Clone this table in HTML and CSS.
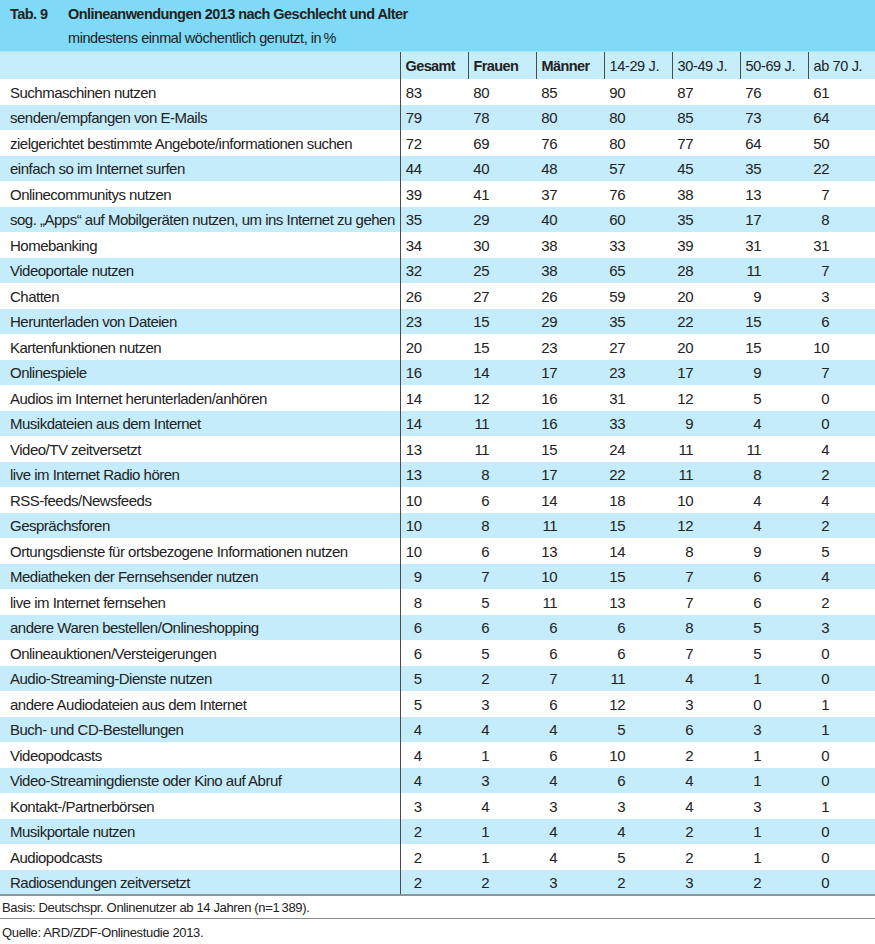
FILE: index.html
```html
<!DOCTYPE html>
<html lang="de">
<head>
<meta charset="utf-8">
<title>Tab. 9</title>
<link rel="stylesheet" href="styles.css">
</head>
<body>
<div class="page">
  <header class="caption">
    <div class="caption-line">
      <span class="tab-no">Tab. 9</span>
      <span class="tab-title">Onlineanwendungen 2013 nach Geschlecht und Alter</span>
    </div>
    <div class="caption-sub">mindestens einmal wöchentlich genutzt, in&#8201;%</div>
  </header>
  <table class="data">
    <colgroup>
      <col class="c-label"><col class="c-num"><col class="c-num"><col class="c-num"><col class="c-num"><col class="c-num"><col class="c-num"><col class="c-last">
    </colgroup>
    <thead>
      <tr><th></th><th>Gesamt</th><th>Frauen</th><th>Männer</th><th class="light">14-29 J.</th><th class="light">30-49 J.</th><th class="light">50-69 J.</th><th class="light">ab 70 J.</th></tr>
    </thead>
    <tbody>
      <tr><td>Suchmaschinen nutzen</td><td><span>83</span></td><td><span>80</span></td><td><span>85</span></td><td><span>90</span></td><td><span>87</span></td><td><span>76</span></td><td><span>61</span></td></tr>
      <tr><td>senden/empfangen von E-Mails</td><td><span>79</span></td><td><span>78</span></td><td><span>80</span></td><td><span>80</span></td><td><span>85</span></td><td><span>73</span></td><td><span>64</span></td></tr>
      <tr><td>zielgerichtet bestimmte Angebote/informationen suchen</td><td><span>72</span></td><td><span>69</span></td><td><span>76</span></td><td><span>80</span></td><td><span>77</span></td><td><span>64</span></td><td><span>50</span></td></tr>
      <tr><td>einfach so im Internet surfen</td><td><span>44</span></td><td><span>40</span></td><td><span>48</span></td><td><span>57</span></td><td><span>45</span></td><td><span>35</span></td><td><span>22</span></td></tr>
      <tr><td>Onlinecommunitys nutzen</td><td><span>39</span></td><td><span>41</span></td><td><span>37</span></td><td><span>76</span></td><td><span>38</span></td><td><span>13</span></td><td><span>7</span></td></tr>
      <tr><td>sog. „Apps“ auf Mobilgeräten nutzen, um ins Internet zu gehen</td><td><span>35</span></td><td><span>29</span></td><td><span>40</span></td><td><span>60</span></td><td><span>35</span></td><td><span>17</span></td><td><span>8</span></td></tr>
      <tr><td>Homebanking</td><td><span>34</span></td><td><span>30</span></td><td><span>38</span></td><td><span>33</span></td><td><span>39</span></td><td><span>31</span></td><td><span>31</span></td></tr>
      <tr><td>Videoportale nutzen</td><td><span>32</span></td><td><span>25</span></td><td><span>38</span></td><td><span>65</span></td><td><span>28</span></td><td><span>11</span></td><td><span>7</span></td></tr>
      <tr><td>Chatten</td><td><span>26</span></td><td><span>27</span></td><td><span>26</span></td><td><span>59</span></td><td><span>20</span></td><td><span>9</span></td><td><span>3</span></td></tr>
      <tr><td>Herunterladen von Dateien</td><td><span>23</span></td><td><span>15</span></td><td><span>29</span></td><td><span>35</span></td><td><span>22</span></td><td><span>15</span></td><td><span>6</span></td></tr>
      <tr><td>Kartenfunktionen nutzen</td><td><span>20</span></td><td><span>15</span></td><td><span>23</span></td><td><span>27</span></td><td><span>20</span></td><td><span>15</span></td><td><span>10</span></td></tr>
      <tr><td>Onlinespiele</td><td><span>16</span></td><td><span>14</span></td><td><span>17</span></td><td><span>23</span></td><td><span>17</span></td><td><span>9</span></td><td><span>7</span></td></tr>
      <tr><td>Audios im Internet herunterladen/anhören</td><td><span>14</span></td><td><span>12</span></td><td><span>16</span></td><td><span>31</span></td><td><span>12</span></td><td><span>5</span></td><td><span>0</span></td></tr>
      <tr><td>Musikdateien aus dem Internet</td><td><span>14</span></td><td><span>11</span></td><td><span>16</span></td><td><span>33</span></td><td><span>9</span></td><td><span>4</span></td><td><span>0</span></td></tr>
      <tr><td>Video/TV zeitversetzt</td><td><span>13</span></td><td><span>11</span></td><td><span>15</span></td><td><span>24</span></td><td><span>11</span></td><td><span>11</span></td><td><span>4</span></td></tr>
      <tr><td>live im Internet Radio hören</td><td><span>13</span></td><td><span>8</span></td><td><span>17</span></td><td><span>22</span></td><td><span>11</span></td><td><span>8</span></td><td><span>2</span></td></tr>
      <tr><td>RSS-feeds/Newsfeeds</td><td><span>10</span></td><td><span>6</span></td><td><span>14</span></td><td><span>18</span></td><td><span>10</span></td><td><span>4</span></td><td><span>4</span></td></tr>
      <tr><td>Gesprächsforen</td><td><span>10</span></td><td><span>8</span></td><td><span>11</span></td><td><span>15</span></td><td><span>12</span></td><td><span>4</span></td><td><span>2</span></td></tr>
      <tr><td>Ortungsdienste für ortsbezogene Informationen nutzen</td><td><span>10</span></td><td><span>6</span></td><td><span>13</span></td><td><span>14</span></td><td><span>8</span></td><td><span>9</span></td><td><span>5</span></td></tr>
      <tr><td>Mediatheken der Fernsehsender nutzen</td><td><span>9</span></td><td><span>7</span></td><td><span>10</span></td><td><span>15</span></td><td><span>7</span></td><td><span>6</span></td><td><span>4</span></td></tr>
      <tr><td>live im Internet fernsehen</td><td><span>8</span></td><td><span>5</span></td><td><span>11</span></td><td><span>13</span></td><td><span>7</span></td><td><span>6</span></td><td><span>2</span></td></tr>
      <tr><td>andere Waren bestellen/Onlineshopping</td><td><span>6</span></td><td><span>6</span></td><td><span>6</span></td><td><span>6</span></td><td><span>8</span></td><td><span>5</span></td><td><span>3</span></td></tr>
      <tr><td>Onlineauktionen/Versteigerungen</td><td><span>6</span></td><td><span>5</span></td><td><span>6</span></td><td><span>6</span></td><td><span>7</span></td><td><span>5</span></td><td><span>0</span></td></tr>
      <tr><td>Audio-Streaming-Dienste nutzen</td><td><span>5</span></td><td><span>2</span></td><td><span>7</span></td><td><span>11</span></td><td><span>4</span></td><td><span>1</span></td><td><span>0</span></td></tr>
      <tr><td>andere Audiodateien aus dem Internet</td><td><span>5</span></td><td><span>3</span></td><td><span>6</span></td><td><span>12</span></td><td><span>3</span></td><td><span>0</span></td><td><span>1</span></td></tr>
      <tr><td>Buch- und CD-Bestellungen</td><td><span>4</span></td><td><span>4</span></td><td><span>4</span></td><td><span>5</span></td><td><span>6</span></td><td><span>3</span></td><td><span>1</span></td></tr>
      <tr><td>Videopodcasts</td><td><span>4</span></td><td><span>1</span></td><td><span>6</span></td><td><span>10</span></td><td><span>2</span></td><td><span>1</span></td><td><span>0</span></td></tr>
      <tr><td>Video-Streamingdienste oder Kino auf Abruf</td><td><span>4</span></td><td><span>3</span></td><td><span>4</span></td><td><span>6</span></td><td><span>4</span></td><td><span>1</span></td><td><span>0</span></td></tr>
      <tr><td>Kontakt-/Partnerbörsen</td><td><span>3</span></td><td><span>4</span></td><td><span>3</span></td><td><span>3</span></td><td><span>4</span></td><td><span>3</span></td><td><span>1</span></td></tr>
      <tr><td>Musikportale nutzen</td><td><span>2</span></td><td><span>1</span></td><td><span>4</span></td><td><span>4</span></td><td><span>2</span></td><td><span>1</span></td><td><span>0</span></td></tr>
      <tr><td>Audiopodcasts</td><td><span>2</span></td><td><span>1</span></td><td><span>4</span></td><td><span>5</span></td><td><span>2</span></td><td><span>1</span></td><td><span>0</span></td></tr>
      <tr><td>Radiosendungen zeitversetzt</td><td><span>2</span></td><td><span>2</span></td><td><span>3</span></td><td><span>2</span></td><td><span>3</span></td><td><span>2</span></td><td><span>0</span></td></tr>
    </tbody>
  </table>
  <p class="note note-basis">Basis: Deutschspr. Onlinenutzer ab 14 Jahren (n=1&#8201;389).</p>
  <p class="note note-source">Quelle: ARD/ZDF-Onlinestudie 2013.</p>
</div>
</body>
</html>
```
FILE: styles.css
```css
html, body {
  margin: 0;
  padding: 0;
  background: #ffffff;
}

.page {
  width: 875px;
  font-family: "Liberation Sans", Arial, sans-serif;
  font-size: 15px;
  letter-spacing: -0.5px;
  color: #222222;
}

.caption {
  background: #7edaf6;
  height: 52px;
  box-sizing: border-box;
  padding: 5px 0 0 10px;
  border-bottom: 1px solid #a9e5f8;
}

.caption-line {
  display: flex;
  line-height: 19px;
  font-size: 14.5px;
  font-weight: bold;
  letter-spacing: -0.55px;
}

.tab-no {
  width: 58px;
}

.caption-sub {
  padding-left: 58px;
  padding-top: 5px;
  line-height: 19px;
  font-size: 14.5px;
  letter-spacing: -0.45px;
}

.data {
  width: 875px;
  border-collapse: collapse;
  table-layout: fixed;
}

.c-label { width: 400px; }
.c-num { width: 68px; }
.c-last { width: 67px; }

.data th {
  background: #c6edfa;
  height: 26px;
  padding: 1px 0 0 5px;
  text-align: left;
  font-weight: bold;
  font-size: 14.5px;
  letter-spacing: -0.6px;
  border-left: 1px solid #4b4b4b;
  white-space: nowrap;
}

.data th.light {
  font-weight: normal;
  letter-spacing: -0.35px;
}

.data th:first-child {
  border-left: none;
}

.data td {
  height: 25.5px;
  box-sizing: border-box;
  padding: 2px 0 0 5px;
  white-space: nowrap;
  line-height: 18px;
}

.data td:first-child {
  padding-left: 10px;
  border-right: 1px solid #4b4b4b;
}

.data td span {
  display: inline-block;
  width: 16px;
  text-align: right;
}

.data tbody tr:nth-child(even) td {
  background: #c4ecfa;
}

.data tbody tr:last-child td {
  border-bottom: 2px solid #8d959a;
}

.note {
  margin: 0;
  font-size: 13px;
  letter-spacing: -0.35px;
  line-height: 20px;
  padding-left: 2px;
}

.note-basis {
  border-bottom: 1px solid #8a8a8a;
  padding-top: 2px;
}

.note-source {
  padding-top: 4px;
}
```
